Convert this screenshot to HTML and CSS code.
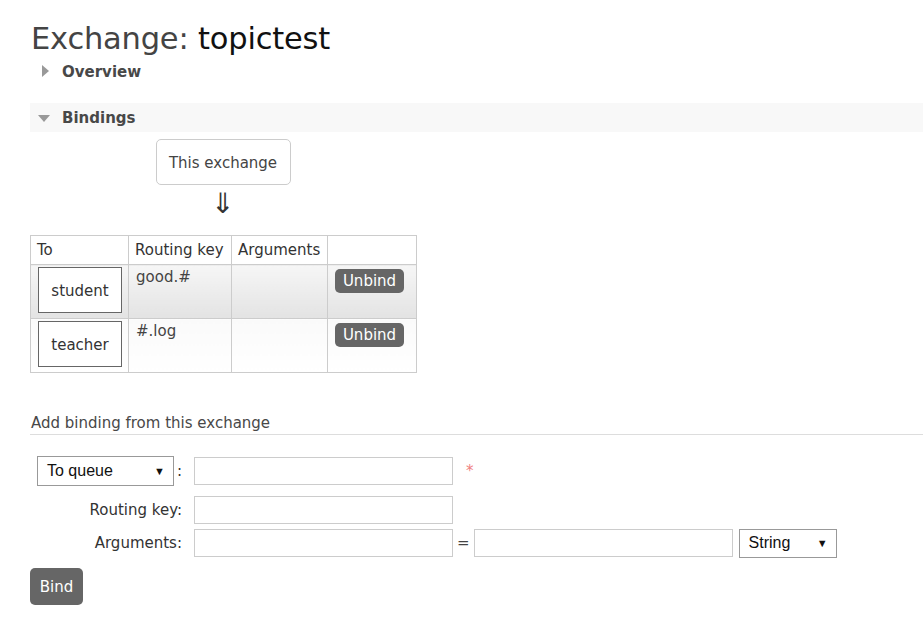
FILE: index.html
```html
<!DOCTYPE html>
<html>
<head>
<meta charset="utf-8">
<link rel="stylesheet" href="styles.css">
</head>
<body>
<div class="page">
  <h1 class="title"><span class="muted">Exchange:</span> <b class="name">topictest</b></h1>
  <div class="section-head closed"><span class="tri-right"></span>Overview</div>
  <div class="section-head open"><span class="tri-down"></span>Bindings</div>
  <div class="bindings">
    <div class="diagram">
      <div class="this-ex">This exchange</div>
      <div class="arrow">⇓</div>
    </div>
    <table class="list">
      <thead>
        <tr><th class="c1">To</th><th class="c2">Routing key</th><th class="c3">Arguments</th><th class="c4"></th></tr>
      </thead>
      <tbody>
        <tr class="alt1">
          <td><span class="queue-box">student</span></td>
          <td class="key">good.#</td>
          <td></td>
          <td><span class="btn small">Unbind</span></td>
        </tr>
        <tr class="alt2">
          <td><span class="queue-box">teacher</span></td>
          <td class="key">#.log</td>
          <td></td>
          <td><span class="btn small">Unbind</span></td>
        </tr>
      </tbody>
    </table>
  </div>
  <h3 class="subhead">Add binding from this exchange</h3>
  <form class="form">
    <div class="row r1">
      <div class="label first"><span class="select sel-dest">To queue<span class="caret">▼</span></span><span class="colon">:</span></div>
      <span class="input"></span>
      <span class="req">*</span>
    </div>
    <div class="row r2">
      <div class="label">Routing key:</div>
      <span class="input"></span>
    </div>
    <div class="row r3">
      <div class="label">Arguments:</div>
      <span class="input"></span>
      <span class="eq">=</span>
      <span class="input"></span>
      <span class="select sel-type">String<span class="caret">▼</span></span>
    </div>
    <div class="actions"><span class="btn big">Bind</span></div>
  </form>
</div>
</body>
</html>
```
FILE: styles.css
```css
html, body { margin: 0; padding: 0; background: #fff; }
body { font-family: "DejaVu Sans", Verdana, sans-serif; color: #484848; }
.page { padding: 20px 0 0 30px; }

.title { margin: 0; font-weight: normal; font-size: 30.5px; line-height: 37px; color: #444; padding-left: 1px; letter-spacing: -0.2px; }
.title .name { font-weight: normal; color: #111; }

.section-head { font-size: 15px; font-weight: bold; color: #484848; height: 29px; display: flex; align-items: center; padding-left: 32px; position: relative; }
.section-head.closed { height: 30px; }
.section-head.open { background: #f8f8f8; margin-top: 16px; }
.tri-right { position: absolute; left: 12px; top: 8px; width: 0; height: 0; border-top: 6px solid transparent; border-bottom: 6px solid transparent; border-left: 7px solid #999; }
.tri-down { position: absolute; left: 8px; top: 12px; width: 0; height: 0; border-left: 6px solid transparent; border-right: 6px solid transparent; border-top: 7px solid #999; }

.bindings { padding-top: 7px; }
.diagram { width: 386px; display: flex; flex-direction: column; align-items: center; }
.this-ex { box-sizing: border-box; border: 1px solid #ccc; border-radius: 5px; width: 135px; height: 46px; padding-top: 2px; display: flex; align-items: center; justify-content: center; font-size: 15px; color: #444; }
.arrow { font-size: 28px; line-height: 28px; margin-top: 5px; color: #333; height: 28px; }

table.list { border-collapse: collapse; margin-top: 17px; font-size: 15px; }
table.list th, table.list td { border: 1px solid #ccc; padding: 0; vertical-align: top; text-align: left; }
table.list th { font-weight: normal; height: 28px; vertical-align: middle; padding: 0 6px; color: #333; }
th.c1 { width: 85px; } th.c2 { width: 90px; } th.c3 { width: 83px; } th.c4 { width: 76px; }
tr.alt1, tr.alt2 { height: 54px; }
tr.alt1 td { background: linear-gradient(#f6f6f6, #e3e3e3); }
tr.alt2 td { background: linear-gradient(#fafafa, #fff); }
table.list td.key { padding: 3px 6px 0 7px; color: #444; }
.queue-box { box-sizing: border-box; display: flex; align-items: center; justify-content: center; margin: 2px 0 0 7px; width: 84px; height: 46px; padding-top: 2px; border: 1px solid #666; background: #fff; color: #333; }
.btn { display: inline-flex; align-items: center; justify-content: center; background: #666; color: #fff; border-radius: 5px; }
.btn.small { margin: 4px 0 0 7px; width: 69px; height: 24px; font-size: 15px; }
.btn.big { width: 53px; height: 37px; font-size: 15px; }

.subhead { margin: 41px 0 0 0; font-weight: normal; font-size: 15px; color: #484848; padding: 0 0 1px 1px; border-bottom: 1px solid #ddd; line-height: 19px; }

.form { padding-top: 22px; font-size: 15px; }
.row { display: flex; align-items: center; height: 28px; }
.r1 { margin-bottom: 11px; }
.r2 { margin-bottom: 5px; }
.r3 { margin-bottom: 11px; }
.label { width: 152px; padding-right: 12px; display: flex; justify-content: flex-end; align-items: center; color: #333; }
.label.first { justify-content: flex-start; padding-left: 7px; width: 145px; }
.select { display: inline-flex; align-items: center; justify-content: space-between; box-sizing: border-box; border: 1px solid #999; background: #fff; font-family: "Liberation Sans", Arial, sans-serif; font-size: 16px; color: #111; padding: 0 8px 0 9px; }
.sel-dest { width: 137px; height: 30px; }
.sel-type { width: 98px; height: 29px; margin-left: 6px; }
.caret { font-size: 11px; }
.colon { margin-left: 3px; }
.input { box-sizing: border-box; display: inline-block; width: 259px; height: 28px; border: 1px solid #ccc; background: #fff; }
.req { color: #f08080; margin-left: 13px; margin-top: 0; font-size: 15px; }
.eq { margin: 0 4px 0 4px; color: #444; }
```
